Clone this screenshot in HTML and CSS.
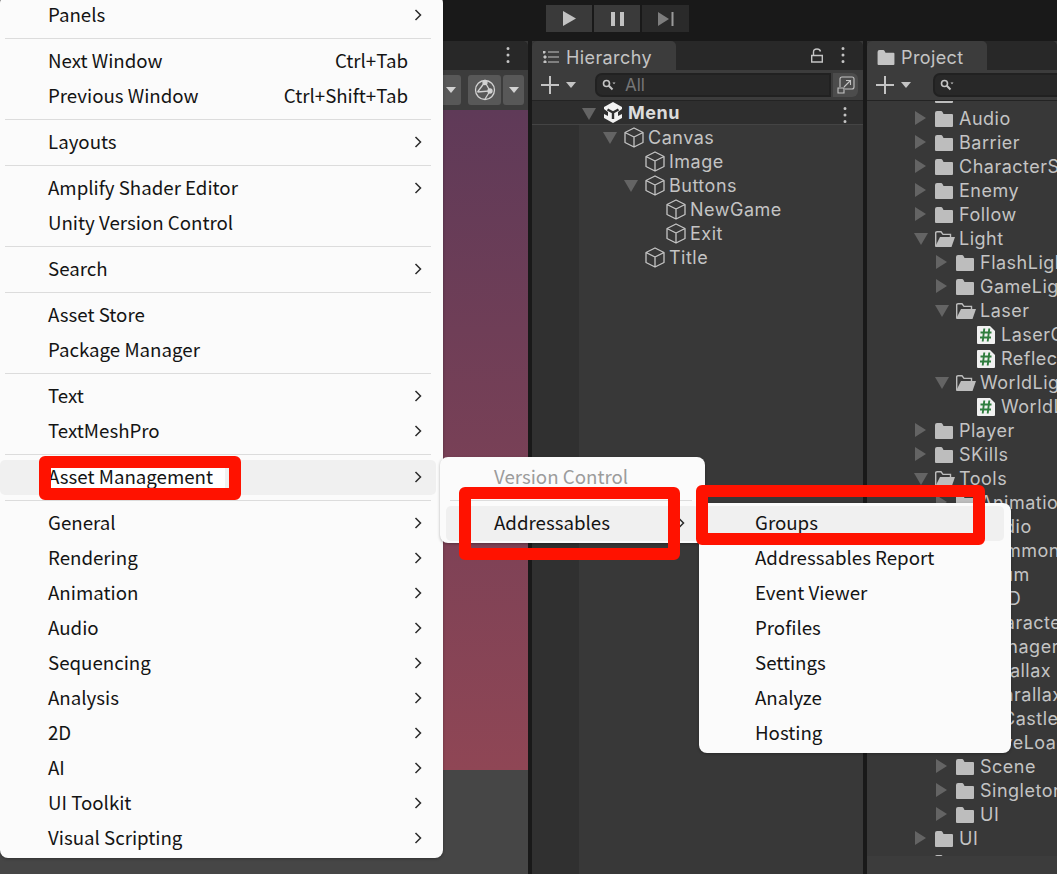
FILE: index.html
```html
<!DOCTYPE html>
<html lang="en">
<head>
  <meta charset="UTF-8">
  <title>Unity Editor - Window menu</title>
  <link rel="stylesheet" href="styles.css">
</head>
<body>

  <svg class="defs" xmlns="http://www.w3.org/2000/svg">
    <symbol id="cube" viewBox="0 0 20 21">
      <path d="M10 1 L19 5.5 V15.5 L10 20 L1 15.5 V5.5 Z M1 5.5 L10 10 L19 5.5 M10 10 V20" fill="none" stroke="currentColor" stroke-width="1.3" stroke-linejoin="round"/>
    </symbol>
    <symbol id="folder" viewBox="0 0 18 16">
      <path d="M0 2 Q0 0 2 0 H6 Q7 0 7.5 1 L8.5 3 H17 Q18 3 18 4 V15 Q18 16 17 16 H1 Q0 16 0 15 Z" fill="currentColor"/>
    </symbol>
    <symbol id="folder-open" viewBox="0 0 20 16">
      <path d="M.7 15 V2 Q.7 .8 2 .8 H6 L8 3.4 H15.5 V6" fill="none" stroke="currentColor" stroke-width="1.4"/>
      <path d="M5 6 H20 L16.5 16 H0 Z" fill="currentColor"/>
    </symbol>
    <symbol id="script" viewBox="0 0 18 18">
      <path d="M1 0 H13 L18 5 V17 Q18 18 17 18 H1 Q0 18 0 17 V1 Q0 0 1 0 Z" fill="#f1f1f1"/>
      <path d="M7.3 2.5 L5.7 15.5 M12.3 2.5 L10.7 15.5 M3.5 6.5 H14.5 M3 11.5 H14" fill="none" stroke="#2f7d3e" stroke-width="1.9"/>
    </symbol>
    <symbol id="dots" viewBox="0 0 4 16">
      <path d="M0.5 1.5 a1.5 1.5 0 1 0 3 0 a1.5 1.5 0 1 0 -3 0 M0.5 8 a1.5 1.5 0 1 0 3 0 a1.5 1.5 0 1 0 -3 0 M0.5 14.5 a1.5 1.5 0 1 0 3 0 a1.5 1.5 0 1 0 -3 0" fill="currentColor"/>
    </symbol>
    <symbol id="plus" viewBox="0 0 18 18">
      <path d="M9 0 V18 M0 9 H18" stroke="currentColor" stroke-width="2" fill="none"/>
    </symbol>
    <symbol id="glass" viewBox="0 0 14 12">
      <circle cx="4.5" cy="4.5" r="3" fill="none" stroke="currentColor" stroke-width="1.6"/>
      <path d="M6.8 6.8 L10.5 10.5" stroke="currentColor" stroke-width="2"/>
      <path d="M10.5 3.5 H13.5 L12 5.2 Z" fill="currentColor"/>
    </symbol>
    <symbol id="chev" viewBox="0 0 10 14">
      <path d="M2.5 2 L7.5 7 L2.5 12" fill="none" stroke="#2b2b2b" stroke-width="1.5"/>
    </symbol>
  </svg>

  <div class="editor">
    <div class="topbar">
      <div class="playbar">
        <div class="play-btn">
          <svg width="13" height="15" viewBox="0 0 13 15"><path d="M0 0 L13 7.5 L0 15 Z" fill="#c2c2c2"/></svg>
        </div>
        <div class="play-btn">
          <svg width="13" height="14" viewBox="0 0 13 14"><path d="M0 0 H4 V14 H0 Z M9 0 H13 V14 H9 Z" fill="#c2c2c2"/></svg>
        </div>
        <div class="play-btn dim">
          <svg width="16" height="14" viewBox="0 0 16 14"><path d="M0 0 L11 7 L0 14 Z" fill="#7d7d7d"/><path d="M13.5 0 H15.5 V14 H13.5 Z" fill="#9a9a9a"/></svg>
        </div>
      </div>
    </div>

    <div class="panels">
      <section class="panel scene">
        <div class="tabs">
          <svg class="tab-dots" width="4" height="16"><use href="#dots"/></svg>
        </div>
        <div class="scene-tools">
          <div class="tool-btn drop"><span class="tri small"></span></div>
          <div class="tool-btn globe">
            <svg width="22" height="22" viewBox="0 0 22 22" fill="none" stroke="#d2d2d2" stroke-width="1.3">
              <circle cx="11" cy="11" r="9.5"/>
              <path d="M11 3 L3.5 13 M11 3 L16 12 L3.5 13 M16 12 L11 20"/>
              <circle cx="11" cy="3.5" r="2" fill="#d2d2d2"/>
              <circle cx="16" cy="12" r="2" fill="#d2d2d2"/>
            </svg>
          </div>
          <div class="tool-btn drop"><span class="tri small"></span></div>
        </div>
        <div class="viewport"></div>
        <div class="scene-foot"></div>
      </section>

      <section class="panel hierarchy">
        <div class="tabs">
          <div class="tab tab-hier">
            <svg width="16" height="12" viewBox="0 0 16 12" class="tab-icon"><path d="M5 1 H16 M5 6 H16 M5 11 H16 M0 0 H2 V2 H0 Z M1 5 H3 V7 H1 Z M1 10 H3 V12 H1 Z" stroke="#c4c4c4" stroke-width="1" fill="#c4c4c4"/></svg>
            Hierarchy
          </div>
          <svg class="lock" width="12" height="15" viewBox="0 0 12 15" fill="none" stroke="#c4c4c4" stroke-width="1.4"><path d="M2.5 7 V4 Q2.5 1 6 1 Q9 1 9.5 3.5"/><path d="M.7 7.5 H11.3 V14 H.7 Z"/></svg>
          <svg class="tab-dots" width="4" height="16"><use href="#dots"/></svg>
        </div>
        <div class="tools">
          <svg class="plus" width="18" height="18"><use href="#plus"/></svg>
          <span class="tri"></span>
          <div class="search">
            <svg width="14" height="12"><use href="#glass"/></svg>
            <span class="search-text">All</span>
          </div>
          <div class="scene-btn">
            <svg width="18" height="18" viewBox="0 0 18 18" fill="none" stroke="#c4c4c4" stroke-width="1.1"><path d="M3 11 V3 Q3 1 5 1 H15 Q17 1 17 3 V11 Q17 13 15 13 H8"/><path d="M1 12 H7 V17 H1 Z"/><path d="M7 11 L13 5 M9 4.5 H13.5 V9"/></svg>
          </div>
        </div>
        <div class="tree hier-tree">
          <div class="row root">
            <span class="arrow open"></span>
            <svg class="unity" width="20" height="21" viewBox="0 0 20 21">
              <path d="M10 0 L19 5 V16 L10 21 L1 16 V5 Z" fill="#f2f2f2"/>
              <path d="M10 10.5 V17 M10 10.5 L4.5 7.5 M10 10.5 L15.5 7.5" stroke="#2f2f2f" stroke-width="2.4"/>
              <path d="M1 7 L5 10 V14 L1 12 Z M19 7 L15 10 V14 L19 12 Z" fill="#2f2f2f"/>
            </svg>
            <span class="name">Menu</span>
            <svg class="row-dots" width="4" height="16"><use href="#dots"/></svg>
          </div>
          <div class="row l1"><span class="arrow open"></span><svg class="ico" width="20" height="21"><use href="#cube"/></svg><span class="name">Canvas</span></div>
          <div class="row l2"><span class="arrow none"></span><svg class="ico" width="20" height="21"><use href="#cube"/></svg><span class="name">Image</span></div>
          <div class="row l2"><span class="arrow open"></span><svg class="ico" width="20" height="21"><use href="#cube"/></svg><span class="name">Buttons</span></div>
          <div class="row l3"><span class="arrow none"></span><svg class="ico" width="20" height="21"><use href="#cube"/></svg><span class="name">NewGame</span></div>
          <div class="row l3"><span class="arrow none"></span><svg class="ico" width="20" height="21"><use href="#cube"/></svg><span class="name">Exit</span></div>
          <div class="row l2"><span class="arrow none"></span><svg class="ico" width="20" height="21"><use href="#cube"/></svg><span class="name">Title</span></div>
        </div>
      </section>

      <section class="panel project">
        <div class="tabs">
          <div class="tab tab-proj">
            <svg class="tab-icon" width="18" height="15"><use href="#folder"/></svg>
            Project
          </div>
        </div>
        <div class="tools">
          <svg class="plus" width="18" height="18"><use href="#plus"/></svg>
          <span class="tri"></span>
          <div class="search search-proj">
            <svg width="14" height="12"><use href="#glass"/></svg>
          </div>
        </div>
        <div class="tree proj-tree">
          <div class="row l1"><span class="arrow none"></span><svg class="fld" width="18" height="16"><use href="#folder"/></svg></div>
          <div class="row l1"><span class="arrow"></span><svg class="fld" width="18" height="16"><use href="#folder"/></svg><span class="name">Audio</span></div>
          <div class="row l1"><span class="arrow"></span><svg class="fld" width="18" height="16"><use href="#folder"/></svg><span class="name">Barrier</span></div>
          <div class="row l1"><span class="arrow"></span><svg class="fld" width="18" height="16"><use href="#folder"/></svg><span class="name">CharacterSystem</span></div>
          <div class="row l1"><span class="arrow"></span><svg class="fld" width="18" height="16"><use href="#folder"/></svg><span class="name">Enemy</span></div>
          <div class="row l1"><span class="arrow"></span><svg class="fld" width="18" height="16"><use href="#folder"/></svg><span class="name">Follow</span></div>
          <div class="row l1"><span class="arrow open"></span><svg class="fld" width="20" height="16"><use href="#folder-open"/></svg><span class="name">Light</span></div>
          <div class="row l2"><span class="arrow"></span><svg class="fld" width="18" height="16"><use href="#folder"/></svg><span class="name">FlashLight</span></div>
          <div class="row l2"><span class="arrow"></span><svg class="fld" width="18" height="16"><use href="#folder"/></svg><span class="name">GameLight</span></div>
          <div class="row l2"><span class="arrow open"></span><svg class="fld" width="20" height="16"><use href="#folder-open"/></svg><span class="name">Laser</span></div>
          <div class="row l3"><span class="arrow none"></span><svg class="fld" width="18" height="18"><use href="#script"/></svg><span class="name">LaserController</span></div>
          <div class="row l3"><span class="arrow none"></span><svg class="fld" width="18" height="18"><use href="#script"/></svg><span class="name">ReflectLaser</span></div>
          <div class="row l2"><span class="arrow open"></span><svg class="fld" width="20" height="16"><use href="#folder-open"/></svg><span class="name">WorldLight</span></div>
          <div class="row l3"><span class="arrow none"></span><svg class="fld" width="18" height="18"><use href="#script"/></svg><span class="name">WorldLight</span></div>
          <div class="row l1"><span class="arrow"></span><svg class="fld" width="18" height="16"><use href="#folder"/></svg><span class="name">Player</span></div>
          <div class="row l1"><span class="arrow"></span><svg class="fld" width="18" height="16"><use href="#folder"/></svg><span class="name">SKills</span></div>
          <div class="row l1"><span class="arrow open"></span><svg class="fld" width="20" height="16"><use href="#folder-open"/></svg><span class="name">Tools</span></div>
          <div class="row l2"><span class="arrow"></span><svg class="fld" width="18" height="16"><use href="#folder"/></svg><span class="name">Animation</span></div>
          <div class="row l2"><span class="arrow"></span><svg class="fld" width="18" height="16"><use href="#folder"/></svg><span class="name">Audio</span></div>
          <div class="row l2"><span class="arrow"></span><svg class="fld" width="18" height="16"><use href="#folder"/></svg><span class="name">Common</span></div>
          <div class="row l2"><span class="arrow"></span><svg class="fld" width="18" height="16"><use href="#folder"/></svg><span class="name">Enum</span></div>
          <div class="row l2"><span class="arrow"></span><svg class="fld" width="18" height="16"><use href="#folder"/></svg><span class="name">HUD</span></div>
          <div class="row l2"><span class="arrow"></span><svg class="fld" width="18" height="16"><use href="#folder"/></svg><span class="name">Character</span></div>
          <div class="row l2"><span class="arrow"></span><svg class="fld" width="18" height="16"><use href="#folder"/></svg><span class="name">Manager</span></div>
          <div class="row l2"><span class="arrow"></span><svg class="fld" width="18" height="16"><use href="#folder"/></svg><span class="name">Parallax</span></div>
          <div class="row l2"><span class="arrow"></span><svg class="fld" width="18" height="16"><use href="#folder"/></svg><span class="name">2Parallax</span></div>
          <div class="row l2"><span class="arrow"></span><svg class="fld" width="18" height="16"><use href="#folder"/></svg><span class="name">In Castle</span></div>
          <div class="row l2"><span class="arrow"></span><svg class="fld" width="18" height="16"><use href="#folder"/></svg><span class="name">SaveLoad</span></div>
          <div class="row l2"><span class="arrow"></span><svg class="fld" width="18" height="16"><use href="#folder"/></svg><span class="name">Scene</span></div>
          <div class="row l2"><span class="arrow"></span><svg class="fld" width="18" height="16"><use href="#folder"/></svg><span class="name">Singleton</span></div>
          <div class="row l2"><span class="arrow"></span><svg class="fld" width="18" height="16"><use href="#folder"/></svg><span class="name">UI</span></div>
          <div class="row l1"><span class="arrow"></span><svg class="fld" width="18" height="16"><use href="#folder"/></svg><span class="name">UI</span></div>
          <div class="row l1"><span class="arrow none"></span><svg class="fld" width="18" height="16"><use href="#folder"/></svg></div>
        </div>
        <div class="proj-foot"></div>
      </section>
    </div>
  </div>

  <div class="menu menu-main">
    <div class="item"><span>Panels</span><span class="chev"><svg width="10" height="14"><use href="#chev"/></svg></span></div>
    <div class="sep"></div>
    <div class="item"><span>Next Window</span><span class="keys">Ctrl+Tab</span><span class="chev"></span></div>
    <div class="item"><span>Previous Window</span><span class="keys">Ctrl+Shift+Tab</span><span class="chev"></span></div>
    <div class="sep"></div>
    <div class="item"><span>Layouts</span><span class="chev"><svg width="10" height="14"><use href="#chev"/></svg></span></div>
    <div class="sep"></div>
    <div class="item"><span>Amplify Shader Editor</span><span class="chev"><svg width="10" height="14"><use href="#chev"/></svg></span></div>
    <div class="item"><span>Unity Version Control</span></div>
    <div class="sep"></div>
    <div class="item"><span>Search</span><span class="chev"><svg width="10" height="14"><use href="#chev"/></svg></span></div>
    <div class="sep"></div>
    <div class="item"><span>Asset Store</span></div>
    <div class="item"><span>Package Manager</span></div>
    <div class="sep"></div>
    <div class="item"><span>Text</span><span class="chev"><svg width="10" height="14"><use href="#chev"/></svg></span></div>
    <div class="item"><span>TextMeshPro</span><span class="chev"><svg width="10" height="14"><use href="#chev"/></svg></span></div>
    <div class="sep"></div>
    <div class="item active"><span class="whiteout">Asset Management</span><span class="chev"><svg width="10" height="14"><use href="#chev"/></svg></span></div>
    <div class="sep"></div>
    <div class="item"><span>General</span><span class="chev"><svg width="10" height="14"><use href="#chev"/></svg></span></div>
    <div class="item"><span>Rendering</span><span class="chev"><svg width="10" height="14"><use href="#chev"/></svg></span></div>
    <div class="item"><span>Animation</span><span class="chev"><svg width="10" height="14"><use href="#chev"/></svg></span></div>
    <div class="item"><span>Audio</span><span class="chev"><svg width="10" height="14"><use href="#chev"/></svg></span></div>
    <div class="item"><span>Sequencing</span><span class="chev"><svg width="10" height="14"><use href="#chev"/></svg></span></div>
    <div class="item"><span>Analysis</span><span class="chev"><svg width="10" height="14"><use href="#chev"/></svg></span></div>
    <div class="item"><span>2D</span><span class="chev"><svg width="10" height="14"><use href="#chev"/></svg></span></div>
    <div class="item"><span>AI</span><span class="chev"><svg width="10" height="14"><use href="#chev"/></svg></span></div>
    <div class="item"><span>UI Toolkit</span><span class="chev"><svg width="10" height="14"><use href="#chev"/></svg></span></div>
    <div class="item"><span>Visual Scripting</span><span class="chev"><svg width="10" height="14"><use href="#chev"/></svg></span></div>
  </div>

  <div class="menu menu-sub">
    <div class="item disabled"><span>Version Control</span></div>
    <div class="sep"></div>
    <div class="item active"><span>Addressables</span><span class="chev"><svg width="10" height="14"><use href="#chev"/></svg></span></div>
  </div>

  <div class="menu menu-addr">
    <div class="item active"><span>Groups</span></div>
    <div class="item"><span>Addressables Report</span></div>
    <div class="item"><span>Event Viewer</span></div>
    <div class="item"><span>Profiles</span></div>
    <div class="item"><span>Settings</span></div>
    <div class="item"><span>Analyze</span></div>
    <div class="item"><span>Hosting</span></div>
  </div>

  <!-- red annotation boxes drawn on top of the screenshot -->
  <div class="mark mark-asset"></div>
  <div class="mark mark-addr"></div>
  <div class="mark mark-groups"></div>

</body>
</html>
```

FILE: styles.css
```css
* {
  box-sizing: border-box;
}
html, body {
  margin: 0;
  height: 100%;
  overflow: hidden;
}
body {
  position: relative;
  background: #191919;
  font-family: Inter, "Noto Sans", sans-serif;
}
.defs {
  display: none;
}

/* editor behind the menus */
.editor {
  display: flex;
  flex-direction: column;
  height: 874px;
}
.topbar {
  height: 41px;
  flex: none;
  background: #191919;
  padding: 5px 0 0 546px;
}
.playbar {
  display: flex;
  gap: 2px;
}
.play-btn {
  width: 46px;
  height: 27px;
  background: #3a3a3a;
  display: flex;
  align-items: center;
  justify-content: center;
}
.play-btn.dim {
  width: 47px;
  background: #2a2a2a;
}
.panels {
  flex: 1;
  display: grid;
  grid-template-columns: 528px 331px 190px;
  column-gap: 4px;
  min-height: 0;
}
.panel {
  display: flex;
  flex-direction: column;
  min-height: 0;
  min-width: 0;
  overflow: hidden;
  background: #383838;
}
.tabs {
  height: 29px;
  flex: none;
  position: relative;
  display: flex;
  background: #282828;
  border-radius: 5px 5px 0 0;
}
.tab {
  height: 29px;
  padding-top: 3px;
  background: #3c3c3c;
  border-radius: 5px 5px 0 0;
  color: #c4c4c4;
  font-size: 18px;
  letter-spacing: .4px;
  display: flex;
  align-items: center;
}
.tab-hier {
  width: 144px;
  padding-left: 11px;
}
.tab-hier .tab-icon {
  margin-right: 7px;
}
.tab-proj {
  width: 120px;
  padding-left: 10px;
}
.tab-proj .tab-icon {
  margin-right: 6px;
  color: #c4c4c4;
}
.tab-dots {
  position: absolute;
  right: 18px;
  top: 6px;
  color: #c4c4c4;
}
.lock {
  position: absolute;
  left: 279px;
  top: 7px;
}
.tools {
  height: 31px;
  flex: none;
  display: flex;
  align-items: center;
  background: #3c3c3c;
  border-bottom: 1px solid #232323;
  padding: 0 4px 1px 9px;
  color: #c4c4c4;
}
.plus {
  flex: none;
}
.tri {
  flex: none;
  margin-left: 7px;
  border-left: 5.5px solid transparent;
  border-right: 5.5px solid transparent;
  border-top: 6px solid #c4c4c4;
}
.search {
  margin-left: 19px;
  width: 236px;
  height: 24px;
  background: #282828;
  border: 2px solid #212121;
  border-radius: 7px 0 0 7px;
  display: flex;
  align-items: center;
  padding-left: 5px;
  color: #c4c4c4;
  flex: none;
}
.search-text {
  margin-left: 9px;
  font-size: 17px;
  color: #767676;
}
.search-proj {
  margin-left: 22px;
  width: 140px;
}
.scene-btn {
  margin-left: 2px;
  width: 25px;
  height: 24px;
  background: #4c4c4c;
  border-radius: 0 6px 6px 0;
  display: flex;
  align-items: center;
  justify-content: center;
}

/* scene view */
.scene-tools {
  height: 40px;
  flex: none;
  background: #3c3c3c;
  display: flex;
  justify-content: flex-end;
  align-items: center;
  gap: 2px;
  padding-right: 4px;
}
.tool-btn {
  height: 30px;
  background: #585858;
  border-radius: 3px;
  display: flex;
  align-items: center;
  justify-content: center;
}
.tool-btn.drop {
  width: 21px;
}
.tool-btn.drop:first-child {
  margin-right: 5px;
}
.tool-btn.globe {
  width: 33px;
}
.tri.small {
  margin: 0;
  border-top-color: #d2d2d2;
}
.viewport {
  height: 660px;
  flex: none;
  background: linear-gradient(180deg, #5f3a58, #8f4655);
}
.scene-foot {
  flex: 1;
  background: #464646;
}

/* trees */
.tree {
  flex: 1;
  min-height: 0;
  overflow: hidden;
  color: #c4c4c4;
  font-size: 18px;
  letter-spacing: .5px;
}
.hier-tree {
  background: linear-gradient(90deg, #303030 47px, #383838 47px);
}
.proj-tree {
  margin-top: -19px;
}
.project .tools {
  position: relative;
  z-index: 1;
}
.row {
  height: 24px;
  display: flex;
  align-items: center;
  white-space: nowrap;
  position: relative;
}
.root {
  background: #2e2e2e;
  border-bottom: 1px solid #444;
  font-weight: 700;
  color: #dcdcdc;
}
.hier-tree .row {
  padding-left: 50px;
}
.hier-tree .l1 {
  padding-left: 71px;
}
.hier-tree .l2 {
  padding-left: 92px;
}
.hier-tree .l3 {
  padding-left: 113px;
}
.proj-tree .l1 {
  padding-left: 47px;
}
.proj-tree .l2 {
  padding-left: 68px;
}
.proj-tree .l3 {
  padding-left: 89px;
}
.arrow {
  flex: none;
  width: 21px;
  height: 14px;
  position: relative;
}
.arrow::before {
  content: "";
  position: absolute;
  left: 1px;
  top: 0;
  border-left: 11px solid #646464;
  border-top: 7px solid transparent;
  border-bottom: 7px solid transparent;
}
.arrow.open::before {
  left: 0;
  top: 2px;
  border-top: 12px solid #646464;
  border-left: 7px solid transparent;
  border-right: 7px solid transparent;
  border-bottom: 0;
}
.arrow.none::before {
  display: none;
}
.ico {
  flex: none;
  color: #c4c4c4;
  margin-right: 4px;
}
.unity {
  flex: none;
  margin-right: 5px;
}
.fld {
  flex: none;
  color: #bdbdbd;
  margin: 1px 6px 0 0;
}
.fld[width="20"] {
  margin-right: 4px;
}
.row-dots {
  position: absolute;
  left: 311px;
  top: 6px;
  color: #c4c4c4;
}
.proj-foot {
  height: 18px;
  flex: none;
  background: #3c3c3c;
  position: relative;
}

/* menus */
.menu {
  position: absolute;
  background: #fbfbfb;
  border-radius: 8px;
  box-shadow: 0 1px 3px rgba(0, 0, 0, .3);
  font-family: "Noto Sans CJK SC", "Noto Sans", sans-serif;
  font-size: 18.7px;
  color: #141414;
  padding: 2.5px 0;
}
.menu-main {
  left: 0;
  top: -5.5px;
  width: 443px;
  padding-top: 3px;
  z-index: 1;
}
.menu-sub {
  left: 440px;
  top: 457px;
  width: 265px;
  z-index: 2;
}
.menu-addr {
  left: 699px;
  top: 503px;
  width: 312px;
  z-index: 3;
}
.item {
  height: 35px;
  display: flex;
  align-items: center;
  border-radius: 5px;
  padding: 0 13px 4px 48px;
  margin-right: 7px;
}
.item.active {
  background: #f0f0f0;
}
.item.disabled {
  color: #9c9c9c;
}
.menu-sub .item {
  margin: 0 6px;
}
.menu-addr .item {
  margin-left: 4px;
  padding-left: 52px;
}
.keys {
  margin-left: auto;
}
.chev {
  margin: 4px 0 0 auto;
  width: 10px;
  height: 14px;
  flex: none;
  display: flex;
}
.keys + .chev {
  margin-left: 5px;
}
.sep {
  height: 1px;
  background: #dcdcdc;
  margin: 5px 12px 5px 5px;
}
.menu-sub .sep {
  margin: 5px 13px 5px 10px;
}
.whiteout {
  background: #fff;
  padding-right: 12px;
}

/* red annotation boxes */
.mark {
  position: absolute;
  z-index: 4;
  border: 12px solid #ff1200;
  border-radius: 6px;
}
.mark-asset {
  left: 39px;
  top: 456px;
  width: 202px;
  height: 44px;
}
.mark-addr {
  left: 459px;
  top: 487px;
  width: 221px;
  height: 73px;
}
.mark-groups {
  left: 696px;
  top: 485px;
  width: 289px;
  height: 60px;
}
```
